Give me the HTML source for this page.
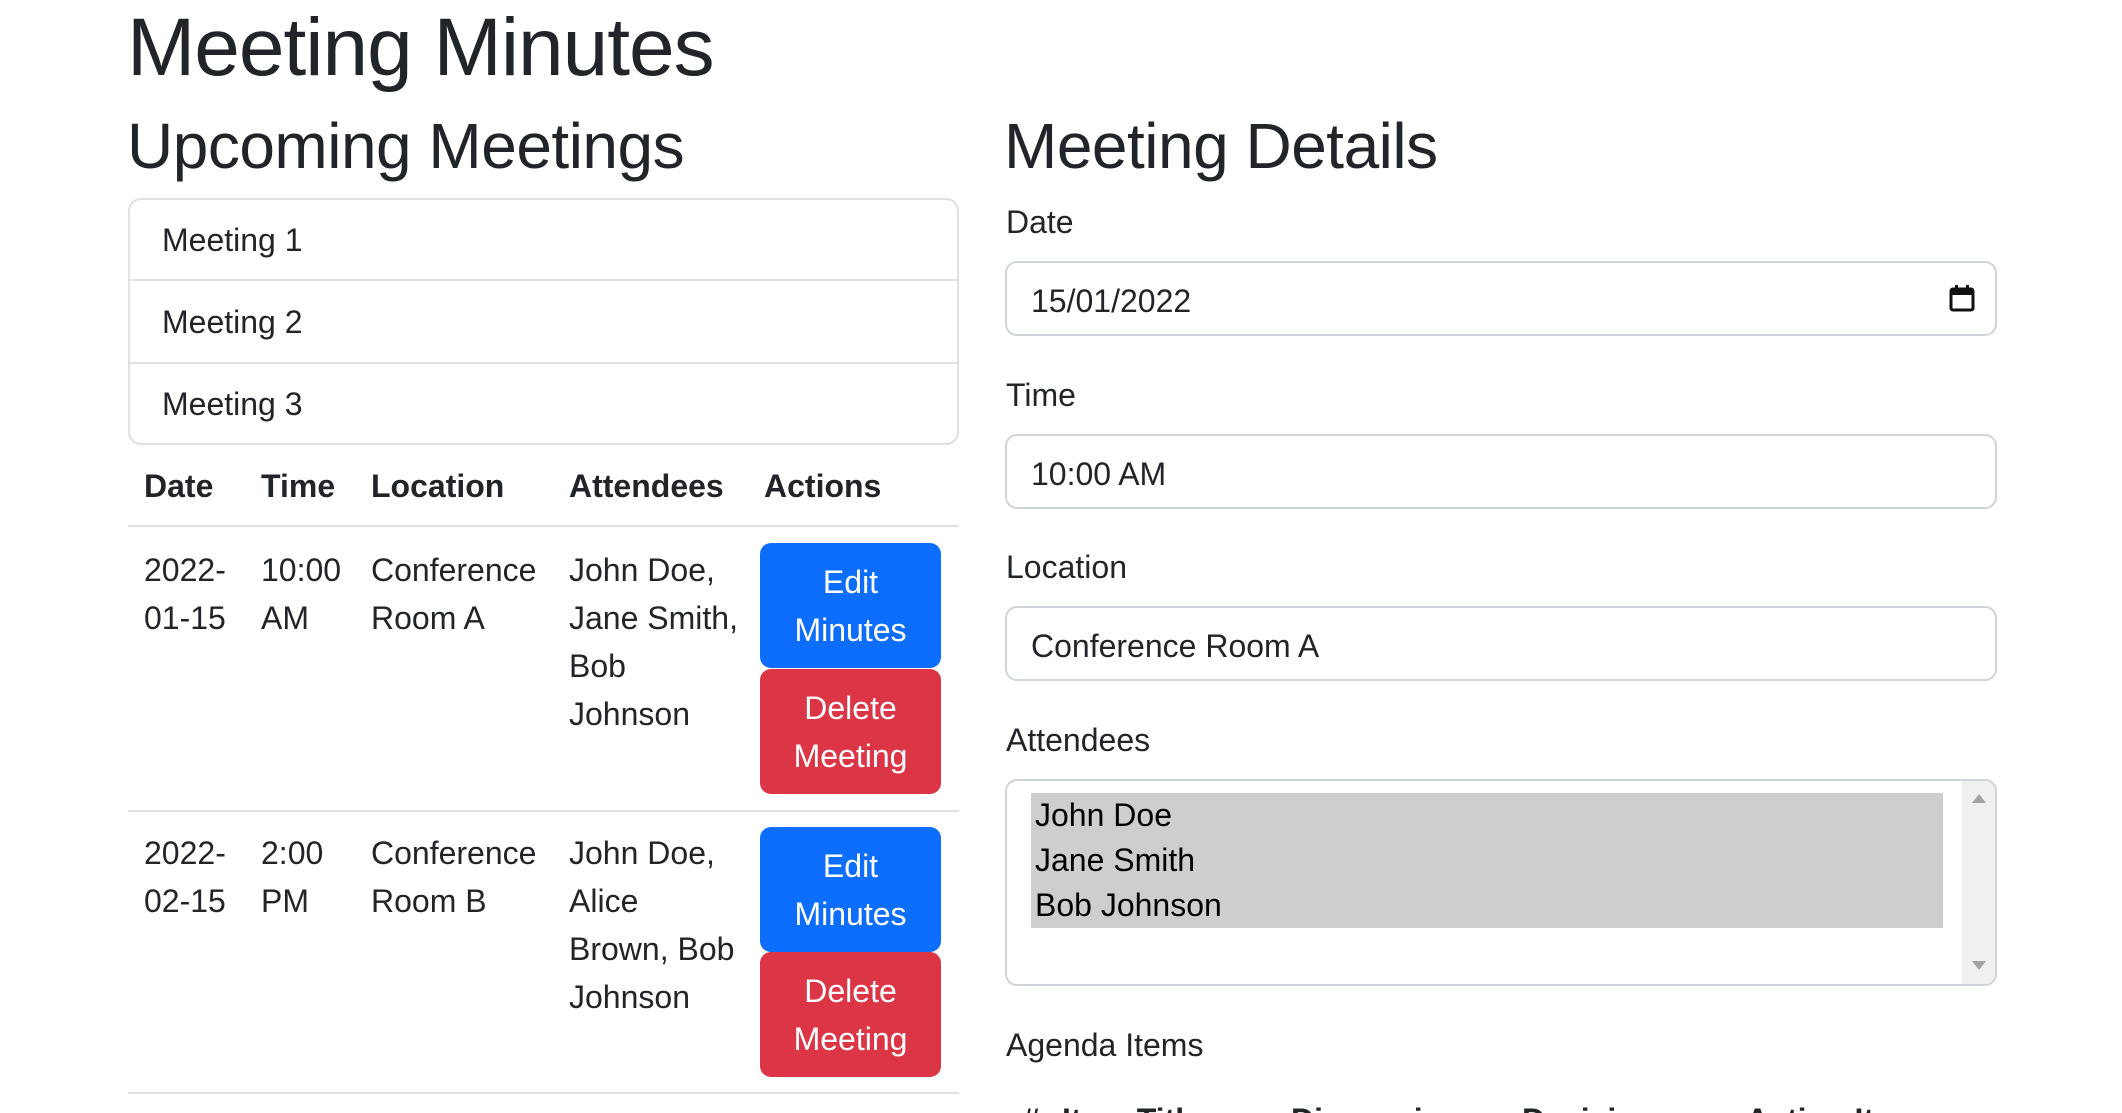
<!DOCTYPE html>
<html><head><meta charset="utf-8"><style>
*{box-sizing:border-box;margin:0;padding:0}
html,body{width:2122px;height:1113px;overflow:hidden;background:#fff}
body{font-family:"Liberation Sans",sans-serif;color:#212529;font-size:32px;position:relative}
.a{position:absolute;white-space:nowrap;line-height:48px}
h1{position:absolute;left:127px;top:0px;font-size:82px;line-height:96px;font-weight:500;letter-spacing:-1px}
h2{position:absolute;top:108px;font-size:64px;line-height:77px;font-weight:500;letter-spacing:-0.5px}
.lg{position:absolute;left:128px;top:198px;width:831px;height:247px;border:2px solid #dee2e6;border-radius:13px}
.li{position:absolute;left:128px;width:831px;height:2px;background:#dee2e6}
.b{font-weight:bold}
.hr{position:absolute;left:128px;width:831px;height:2px;background:#dee2e6}
.btn{position:absolute;left:760px;width:181px;height:125px;border-radius:11px;color:#fff;text-align:center;line-height:48px;padding-top:15px;font-size:32px}
.pri{background:#0d6efd}.dan{background:#dc3545}
.inp{position:absolute;left:1005px;width:992px;height:75px;border:2px solid #ced4da;border-radius:12px}
</style></head><body>
<h1>Meeting Minutes</h1>
<h2 style="left:127px">Upcoming Meetings</h2>
<h2 style="left:1004px">Meeting Details</h2>

<div class="lg"></div>
<div class="li" style="top:279px"></div>
<div class="li" style="top:362px"></div>
<div class="a" style="left:162px;top:216px">Meeting 1</div>
<div class="a" style="left:162px;top:298px">Meeting 2</div>
<div class="a" style="left:162px;top:380px">Meeting 3</div>

<div class="a b" style="left:144px;top:462px">Date</div>
<div class="a b" style="left:261px;top:462px">Time</div>
<div class="a b" style="left:371px;top:462px">Location</div>
<div class="a b" style="left:569px;top:462px">Attendees</div>
<div class="a b" style="left:764px;top:462px">Actions</div>
<div class="hr" style="top:525px"></div>

<div class="a" style="left:144px;top:546px">2022-<br>01-15</div>
<div class="a" style="left:261px;top:546px">10:00<br>AM</div>
<div class="a" style="left:371px;top:546px">Conference<br>Room A</div>
<div class="a" style="left:569px;top:546px">John Doe,<br>Jane Smith,<br>Bob<br>Johnson</div>
<div class="btn pri" style="top:543px">Edit<br>Minutes</div>
<div class="btn dan" style="top:669px">Delete<br>Meeting</div>
<div class="hr" style="top:810px"></div>

<div class="a" style="left:144px;top:829px">2022-<br>02-15</div>
<div class="a" style="left:261px;top:829px">2:00<br>PM</div>
<div class="a" style="left:371px;top:829px">Conference<br>Room B</div>
<div class="a" style="left:569px;top:829px">John Doe,<br>Alice<br>Brown, Bob<br>Johnson</div>
<div class="btn pri" style="top:827px">Edit<br>Minutes</div>
<div class="btn dan" style="top:952px">Delete<br>Meeting</div>
<div class="hr" style="top:1092px"></div>

<div class="a" style="left:1006px;top:198px">Date</div>
<div class="inp" style="top:261px"></div>
<div class="a" style="left:1031px;top:277px">15/01/2022</div>
<svg style="position:absolute;left:1949px;top:284px" width="26" height="28" viewBox="0 0 26 28"><rect x="2" y="5" width="22" height="21" rx="2" fill="none" stroke="#111" stroke-width="3"/><rect x="2" y="5" width="22" height="6" fill="#111"/><rect x="6" y="1" width="3" height="6" fill="#111"/><rect x="17" y="1" width="3" height="6" fill="#111"/></svg>

<div class="a" style="left:1006px;top:371px">Time</div>
<div class="inp" style="top:434px"></div>
<div class="a" style="left:1031px;top:450px">10:00 AM</div>

<div class="a" style="left:1006px;top:543px">Location</div>
<div class="inp" style="top:606px"></div>
<div class="a" style="left:1031px;top:622px">Conference Room A</div>

<div class="a" style="left:1006px;top:716px">Attendees</div>
<div class="inp" style="top:779px;height:207px"></div>
<div style="position:absolute;left:1962px;top:781px;width:33px;height:203px;background:#f0f0f0;border-radius:0 10px 10px 0"></div>
<div style="position:absolute;left:1972px;top:794px;width:0;height:0;border-left:7px solid transparent;border-right:7px solid transparent;border-bottom:9px solid #a3a3a3"></div>
<div style="position:absolute;left:1972px;top:961px;width:0;height:0;border-left:7px solid transparent;border-right:7px solid transparent;border-top:9px solid #a3a3a3"></div>
<div style="position:absolute;left:1031px;top:793px;width:912px;height:135px;background:#cecece"></div>
<div class="a" style="left:1035px;top:793px;line-height:45px;color:#000">John Doe<br>Jane Smith<br>Bob Johnson</div>

<div class="a" style="left:1006px;top:1021px">Agenda Items</div>
<div class="a b" style="left:1022px;top:1096px">#</div>
<div class="a b" style="left:1062px;top:1096px">Item Title</div>
<div class="a b" style="left:1291px;top:1096px">Discussion</div>
<div class="a b" style="left:1522px;top:1096px">Decisions</div>
<div class="a b" style="left:1746px;top:1096px">Action Items</div>
</body></html>
